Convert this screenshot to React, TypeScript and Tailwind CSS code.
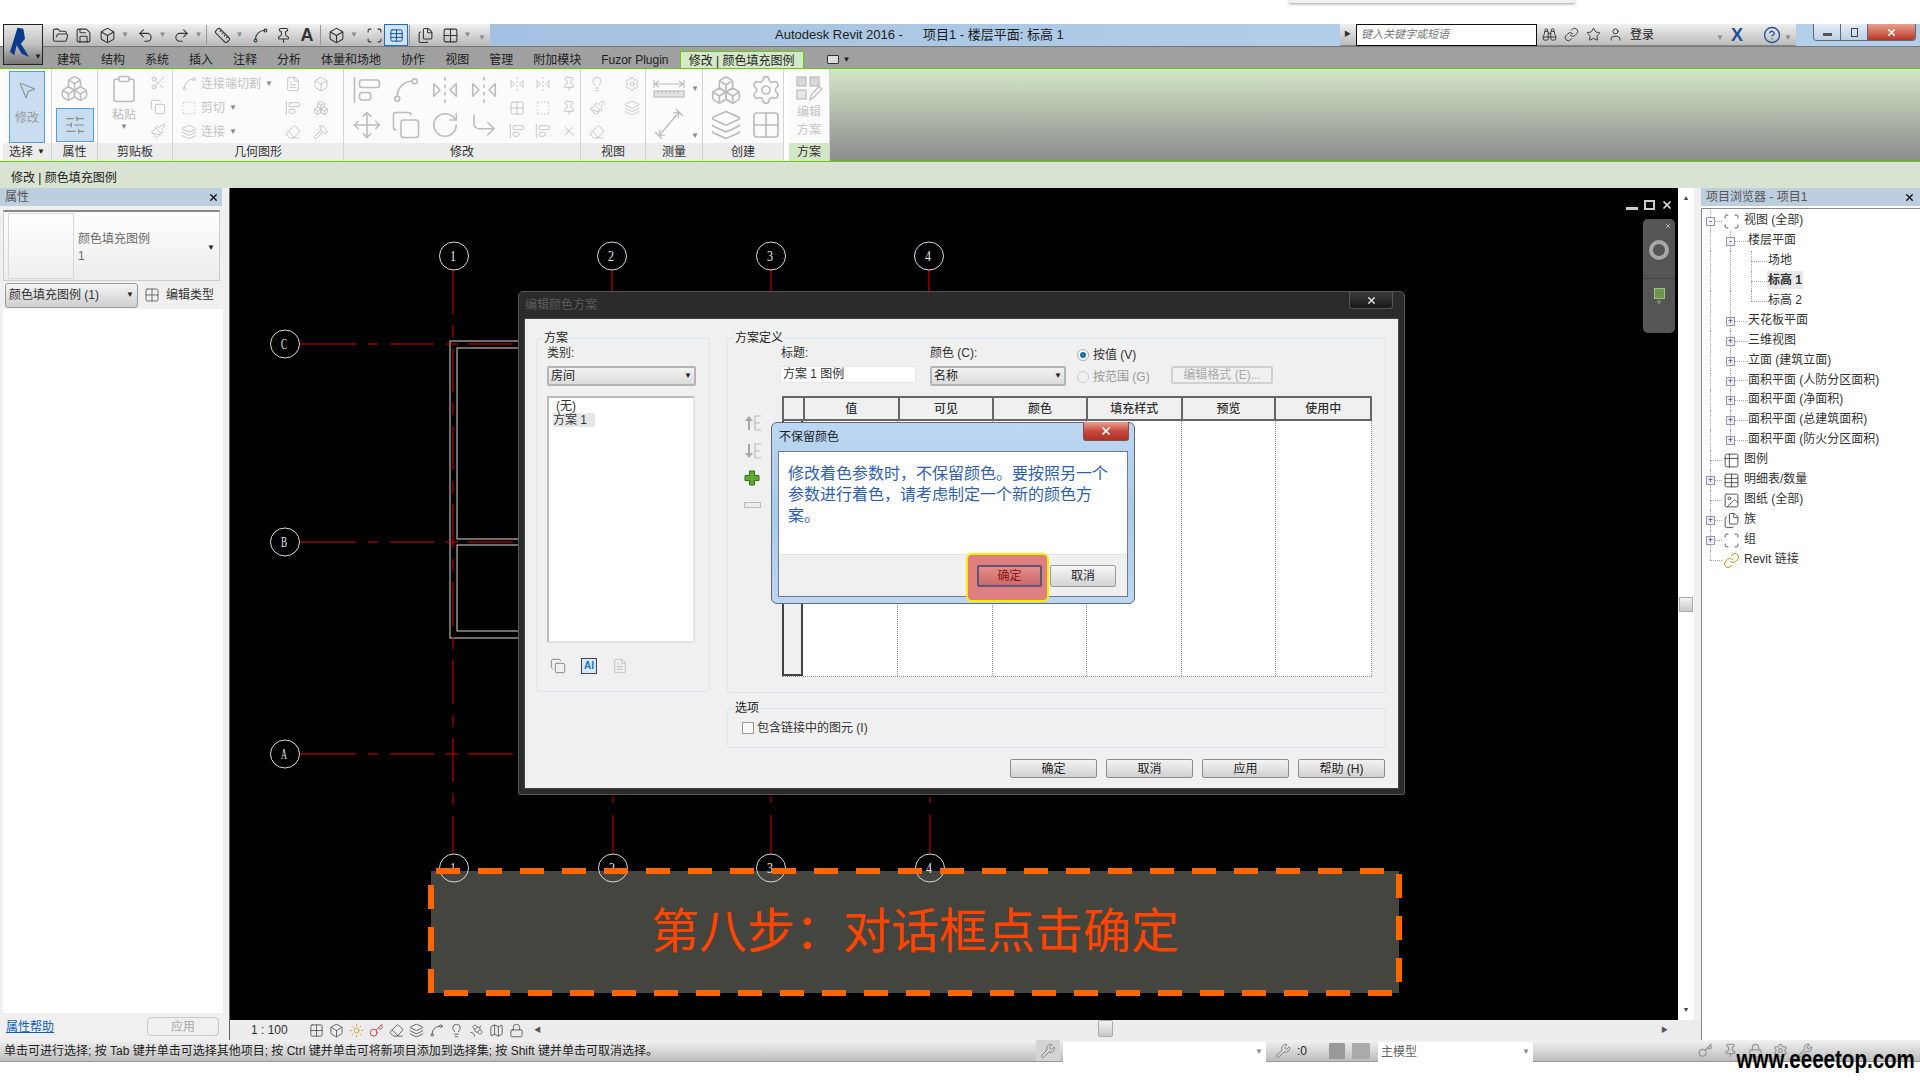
import {
  AlignStartVertical, Binoculars, Box, Boxes, CircleHelp, Clipboard, Copy,
  CornerDownRight, Eraser, Files, FileText, FlipHorizontal2, FolderOpen, Grid2x2, Hammer, Image, Key, Layers,
  Lightbulb, Link, Lock, Map, MousePointer2, Move, Paintbrush, Pin, Redo2, RotateCw, Ruler, Satellite,
  Save, Scan, Scissors, Settings, SlidersHorizontal, Spline, SquareDashed, Star, Sun, Table, Table2, Undo2, User, Wrench, X,
} from "lucide-react";
import type { ComponentType, ReactNode } from "react";

type IconType = ComponentType<{ size?: number; strokeWidth?: number; className?: string }>;

function Dim({ icon: I, size = 16 }: { icon: IconType; size?: number }) {
  return <I size={size} strokeWidth={1.25} className="text-[#bcbcbc] shrink-0" />;
}

function Caret({ dark }: { dark?: boolean }) {
  return <span className={`inline-block text-[8px] leading-none ${dark ? "text-[#222]" : "text-[#8a8a8a]"}`}>▼</span>;
}

function Qat({ icon: I, caret, w, size = 17 }: { icon: IconType; caret?: boolean; w: string; size?: number }) {
  return (
    <div className={`${w} shrink-0 flex items-center justify-center gap-[5px]`}>
      <I size={size} strokeWidth={1.5} className="text-[#333]" />
      {caret && <Caret />}
    </div>
  );
}

function QatSep() {
  return <div className="w-px h-[20px] bg-[#999] mx-[1px]" />;
}

function Panel({ w, label, green, children }: { w: string; label: ReactNode; green?: boolean; children: ReactNode }) {
  return (
    <div className={`${w} shrink-0 flex flex-col border-r border-[#d4d4d4]`}>
      <div className="h-[74px] bg-[#fbfbfb] overflow-hidden">{children}</div>
      <div className={`h-[18px] flex items-center justify-center text-xs text-[#333] ${green ? "bg-[#d3e6c6]" : "bg-[#ececec]"}`}>
        {label}
      </div>
    </div>
  );
}

const tabs = ["建筑", "结构", "系统", "插入", "注释", "分析", "体量和场地", "协作", "视图", "管理", "附加模块", "Fuzor Plugin"];

function DimensionIcon() {
  return (
    <svg width="32" height="20" viewBox="0 0 32 20" fill="none" stroke="#bcbcbc" strokeWidth="1.2">
      <path d="M1 1v8M31 1v8M2 5h28M2 5l4-3M2 5l4 3M30 5l-4-3M30 5l-4 3" />
      <rect x="1" y="12" width="30" height="6" fill="#e4e4e4" />
      <path d="M5 12v3M9 12v3M13 12v3M17 12v3M21 12v3M25 12v3" />
    </svg>
  );
}

function AlignedIcon() {
  return (
    <svg width="32" height="32" viewBox="0 0 32 32" fill="none" stroke="#bcbcbc" strokeWidth="1.2">
      <path d="M2 24l7 7M23 1l7 7M6 28L26 4M6 28l1-6M6 28l6-1M26 4l-1 6M26 4l-6 1" />
    </svg>
  );
}

function SchemeIcon() {
  return (
    <svg width="26" height="26" viewBox="0 0 26 26" fill="none" stroke="#bcbcbc" strokeWidth="1.2">
      <rect x="1" y="1" width="9" height="9" fill="#d8d8d8" />
      <rect x="14" y="1" width="9" height="9" fill="#d8d8d8" />
      <rect x="1" y="14" width="9" height="9" fill="#e6e6e6" />
      <path d="M14 24l1-5L23 10l3 3-9 9z" fill="#f4f4f4" />
    </svg>
  );
}

function Ribbon() {
  return (
    <div className="h-[94px] flex border-y border-[#66cc00] pl-[3px] bg-white">
      <Panel w="w-[49px]" label={<span className="flex items-center gap-1">选择 <Caret dark /></span>}>
        <div className="mx-[6px] mt-[2px] h-[72px] bg-[#c9ddf1] border border-[#5a9bd8] flex flex-col items-center pt-[8px] text-xs text-[#9a9a9a]">
          <MousePointer2 size={20} strokeWidth={1.25} className="text-[#8a8a8a]" />
          <span className="mt-[10px]">修改</span>
        </div>
      </Panel>
      <Panel w="w-[46px]" label="属性">
        <div className="flex flex-col items-center pt-[5px]">
          <Dim icon={Boxes} size={29} />
          <div className="mt-[5px] w-[38px] h-[34px] bg-[#c9ddf1] border border-[#5a9bd8] flex items-center justify-center">
            <SlidersHorizontal size={22} strokeWidth={1.25} className="text-[#8a8a8a]" />
          </div>
        </div>
      </Panel>
      <Panel w="w-[75px]" label="剪贴板">
        <div className="flex justify-between pl-[11px] pr-[6px] pt-[5px]">
          <div className="flex flex-col items-center text-xs text-[#bcbcbc]">
            <Dim icon={Clipboard} size={30} />
            <span className="mt-[3px]">粘贴</span>
            <Caret />
          </div>
          <div className="flex flex-col gap-[8px] pt-[1px]">
            <Dim icon={Scissors} />
            <Dim icon={Copy} />
            <Dim icon={Paintbrush} />
          </div>
        </div>
      </Panel>
      <Panel w="w-[171px]" label="几何图形">
        <div className="flex gap-[2px] pl-2 pt-[7px]">
          <div className="w-[102px] flex flex-col gap-[8px] text-xs text-[#c4c4c4]">
            <div className="flex items-center gap-[4px] whitespace-nowrap"><Dim icon={Spline} />连接端切割 <Caret /></div>
            <div className="flex items-center gap-[4px] whitespace-nowrap"><Dim icon={SquareDashed} />剪切 <Caret /></div>
            <div className="flex items-center gap-[4px] whitespace-nowrap"><Dim icon={Layers} />连接 <Caret /></div>
          </div>
          <div className="grid grid-cols-2 gap-x-[8px] gap-y-[8px] w-[48px]">
            <Dim icon={FileText} /><Dim icon={Box} />
            <Dim icon={AlignStartVertical} /><Dim icon={Boxes} />
            <Dim icon={Eraser} /><Dim icon={Hammer} />
          </div>
        </div>
      </Panel>
      <Panel w="w-[237px]" label="修改">
        <div className="flex gap-[10px] pl-2 pt-[6px]">
          <div className="grid grid-cols-4 gap-x-[9px] gap-y-[5px]">
            <Dim icon={AlignStartVertical} size={30} /><Dim icon={Spline} size={30} />
            <Dim icon={FlipHorizontal2} size={30} /><Dim icon={FlipHorizontal2} size={30} />
            <Dim icon={Move} size={30} /><Dim icon={Copy} size={30} />
            <Dim icon={RotateCw} size={30} /><Dim icon={CornerDownRight} size={30} />
          </div>
          <div className="grid grid-cols-3 gap-x-[10px] gap-y-[7px] pt-[1px]">
            <Dim icon={FlipHorizontal2} /><Dim icon={FlipHorizontal2} /><Dim icon={Pin} />
            <Dim icon={Grid2x2} /><Dim icon={SquareDashed} /><Dim icon={Pin} />
            <Dim icon={AlignStartVertical} /><Dim icon={AlignStartVertical} /><Dim icon={X} />
          </div>
        </div>
      </Panel>
      <Panel w="w-[65px]" label="视图">
        <div className="grid grid-cols-2 gap-x-[18px] gap-y-[8px] pl-2 pt-[7px] w-[60px]">
          <Dim icon={Lightbulb} /><Dim icon={Settings} />
          <Dim icon={Paintbrush} /><Dim icon={Layers} />
          <Dim icon={Eraser} />
        </div>
      </Panel>
      <Panel w="w-[57px]" label="测量">
        <div className="flex flex-col items-start gap-[9px] pt-[10px] pl-[7px]">
          <div className="flex items-center gap-[6px]"><DimensionIcon /><Caret /></div>
          <div className="flex items-end gap-[6px]"><AlignedIcon /><Caret /></div>
        </div>
      </Panel>
      <Panel w="w-[81px]" label="创建">
        <div className="grid grid-cols-2 gap-x-[7px] gap-y-[3px] pl-[7px] pt-[5px]">
          <Dim icon={Boxes} size={32} /><Dim icon={Settings} size={32} />
          <Dim icon={Layers} size={32} /><Dim icon={Grid2x2} size={32} />
        </div>
      </Panel>
      <div className="w-[5px] shrink-0 bg-white" />
      <Panel w="w-[41px]" label="方案" green>
        <div className="flex flex-col items-center pt-[7px] text-xs leading-[18px] text-[#c4c4c4]">
          <SchemeIcon />
          <span className="mt-[1px]">编辑</span>
          <span>方案</span>
        </div>
      </Panel>
      <div className="flex-1 bg-gradient-to-b from-[#d4e7c6] to-[#8c8c8c]" />
    </div>
  );
}

function PanelTitle({ text, pr }: { text: string; pr: string }) {
  return (
    <div className={`h-[18px] bg-[#bdcede] flex items-center justify-between pl-[5px] ${pr} text-xs text-[#555]`}>
      <span>{text}</span>
      <X size={11} strokeWidth={3} className="text-[#111]" />
    </div>
  );
}

function LeftPanel() {
  return (
    <div className="w-[229px] shrink-0 bg-[#f0f0f0] flex flex-col pr-[7px]">
      <PanelTitle text="属性" pr="pr-[3px]" />
      <div className="mt-1 ml-[3px] mr-[2px] h-[71px] border-t-2 border-[#888] bg-gradient-to-b from-white to-[#ececec] border-x border-b border-x-[#ccc] border-b-[#ccc] flex items-center pl-[4px] text-xs text-[#6a6a6a]">
        <div className="w-[66px] h-[66px] border border-[#d8d8d8] bg-gradient-to-b from-white to-[#efefef]" />
        <div className="ml-[4px] leading-[17px] pt-[3px]">
          <div>颜色填充图例</div>
          <div>1</div>
        </div>
        <div className="ml-auto mr-1 text-[#555]"><Caret dark /></div>
      </div>
      <div className="h-[28px] ml-[5px] flex items-center text-xs text-[#333]">
        <div className="w-[133px] h-[25px] border border-[#999] rounded-[3px] bg-gradient-to-b from-[#f4f4f4] to-[#cfcfcf] flex items-center justify-between px-[3px]">
          颜色填充图例 (1) <Caret dark />
        </div>
        <Grid2x2 size={16} strokeWidth={1.25} className="ml-[6px] text-[#555]" />
        <span className="ml-[6px]">编辑类型</span>
      </div>
      <div className="flex-1 bg-white ml-[3px] mr-[-1px]" />
      <div className="h-[27px] flex items-center justify-between pl-[6px] pr-[3px] text-xs">
        <span className="text-[#0a5ec2] underline">属性帮助</span>
        <div className="w-[72px] h-[19px] border border-[#c8c8c8] rounded-sm flex items-center justify-center text-[#aaa]">应用</div>
      </div>
    </div>
  );
}

type Row = { lvl: number; box?: string; icon?: IconType; text: string; bold?: boolean; gold?: boolean };

const rows: Row[] = [
  { lvl: 0, box: "-", icon: Scan, text: "视图 (全部)" },
  { lvl: 1, box: "-", text: "楼层平面" },
  { lvl: 2, text: "场地" },
  { lvl: 2, text: "标高 1", bold: true },
  { lvl: 2, text: "标高 2" },
  { lvl: 1, box: "+", text: "天花板平面" },
  { lvl: 1, box: "+", text: "三维视图" },
  { lvl: 1, box: "+", text: "立面 (建筑立面)" },
  { lvl: 1, box: "+", text: "面积平面 (人防分区面积)" },
  { lvl: 1, box: "+", text: "面积平面 (净面积)" },
  { lvl: 1, box: "+", text: "面积平面 (总建筑面积)" },
  { lvl: 1, box: "+", text: "面积平面 (防火分区面积)" },
  { lvl: 0, icon: Table2, text: "图例" },
  { lvl: 0, box: "+", icon: Table, text: "明细表/数量" },
  { lvl: 0, icon: Image, text: "图纸 (全部)" },
  { lvl: 0, box: "+", icon: Files, text: "族" },
  { lvl: 0, box: "+", icon: Scan, text: "组" },
  { lvl: 0, icon: Link, text: "Revit 链接", gold: true },
];

function TreeRow({ r, i }: { r: Row; i: number }) {
  const boxLeft = r.lvl === 0 ? "left-[4px]" : "left-[24px]";
  const textLeft = r.lvl === 0 ? "left-[41px]" : r.lvl === 1 ? "left-[45px]" : "left-[65px]";
  const tick = r.lvl === 0 ? "left-[8px] w-[14px]" : r.lvl === 1 ? "left-[28px] w-[18px]" : "left-[49px] w-[16px]";
  return (
    <div className="relative h-[19.95px] text-xs text-[#333] whitespace-nowrap">
      {i < 17 && <div className="absolute left-[8px] top-0 h-full border-l border-dotted border-[#aaa]" />}
      {i === 17 && <div className="absolute left-[8px] top-0 h-1/2 border-l border-dotted border-[#aaa]" />}
      {i >= 1 && i <= 11 && <div className={`absolute left-[28px] top-0 border-l border-dotted border-[#aaa] ${i === 11 ? "h-1/2" : "h-full"}`} />}
      {i >= 2 && i <= 4 && <div className={`absolute left-[49px] top-0 border-l border-dotted border-[#aaa] ${i === 4 ? "h-1/2" : "h-full"}`} />}
      <div className={`absolute top-1/2 border-t border-dotted border-[#aaa] ${tick}`} />
      {r.box && (
        <div className={`absolute ${boxLeft} top-[6px] w-[9px] h-[9px] border border-[#99a] bg-[#eef] flex items-center justify-center text-[9px] leading-none text-[#336]`}>
          {r.box}
        </div>
      )}
      {r.icon && (
        <r.icon
          size={17}
          strokeWidth={1.4}
          className={`absolute left-[21px] top-[2px] bg-white ${r.gold ? "text-[#c69a10]" : "text-[#555]"}`}
        />
      )}
      <span className={`absolute ${textLeft} top-[1px] px-[1px] ${r.bold ? "font-bold bg-[#e8e8e8] py-[1px] -mt-[1px]" : ""}`}>{r.text}</span>
    </div>
  );
}

function RightPanel() {
  return (
    <div className="flex-1 flex flex-col bg-white">
      <PanelTitle text="项目浏览器 - 项目1" pr="pr-[5px]" />
      <div className="flex-1 border-l border-t border-[#888] mt-[2px] pt-[2px]">
        {rows.map((r, i) => (
          <TreeRow key={r.text + i} r={r} i={i} />
        ))}
      </div>
    </div>
  );
}

function Bubble({ x, y, t }: { x: number; y: number; t: string }) {
  return (
    <g>
      <ellipse cx={x} cy={y} rx={14.5} ry={14} fill="none" stroke="#d8d8d8" strokeWidth={1} />
      <text x={x - 1} y={y + 5} textAnchor="middle" fontSize={14} fill="#e8e8e8" fontFamily="Liberation Serif" textLength={6} lengthAdjust="spacingAndGlyphs">
        {t}
      </text>
    </g>
  );
}

function Drawing() {
  const vDash = "44 11 12 11";
  const hDash = "57 12 10 12 44 12 12 10 45";
  return (
    <svg className="absolute inset-0 w-full h-full" viewBox="229 188 1448 832">
      <g stroke="#d8d8d8" strokeWidth={1} fill="none">
        <rect x={449} y={341} width={500} height={297} />
        <rect x={456} y={348} width={490} height={191} />
        <rect x={456} y={545} width={490} height={86} />
      </g>
      <g stroke="#e00000" strokeWidth={1}>
        <line x1={452} y1={270} x2={452} y2={854} strokeDasharray={vDash} />
        <line x1={611} y1={270} x2={611} y2={291} />
        <line x1={770} y1={270} x2={770} y2={291} />
        <line x1={928} y1={270} x2={928} y2={291} />
        <line x1={612} y1={797} x2={612} y2={803} />
        <line x1={770} y1={797} x2={770} y2={803} />
        <line x1={929} y1={797} x2={929} y2={803} />
        <line x1={612} y1={815} x2={612} y2={854} />
        <line x1={770} y1={815} x2={770} y2={854} />
        <line x1={929} y1={815} x2={929} y2={854} />
        <line x1={298} y1={344} x2={512} y2={344} strokeDasharray={hDash} />
        <line x1={298} y1={542} x2={512} y2={542} strokeDasharray={hDash} />
        <line x1={298} y1={754} x2={512} y2={754} strokeDasharray={hDash} />
      </g>
      <Bubble x={453} y={256} t="1" />
      <Bubble x={611} y={256} t="2" />
      <Bubble x={770} y={256} t="3" />
      <Bubble x={928} y={256} t="4" />
      <Bubble x={284} y={344} t="C" />
      <Bubble x={284} y={542} t="B" />
      <Bubble x={284} y={754} t="A" />
    </svg>
  );
}

function Group({ title, className, children }: { title: string; className: string; children: ReactNode }) {
  return (
    <div className={`relative border border-[#dde5ea] rounded-[3px] ${className}`}>
      <span className="absolute -top-[9px] left-[6px] bg-[#f0f0f0] px-[1px] text-xs leading-4 text-[#222]">{title}</span>
      {children}
    </div>
  );
}

function Select({ w, text }: { w: string; text: string }) {
  return (
    <div className={`${w} h-[20px] border-2 border-[#b5b5b5] rounded-[2px] bg-gradient-to-b from-[#f2f2f2] to-[#dcdcdc] flex items-center justify-between px-[2px] text-xs text-[#222]`}>
      {text} <Caret dark />
    </div>
  );
}

function DialogButton({ text }: { text: string }) {
  return (
    <div className="w-[87px] h-[19px] border border-[#8c8c8c] rounded-[2px] bg-gradient-to-b from-[#f4f4f4] to-[#d0d0d0] flex items-center justify-center text-xs text-[#222]">
      {text}
    </div>
  );
}

function MoveRowIcon({ down }: { down?: boolean }) {
  return (
    <svg width="18" height="18" viewBox="0 0 18 18" fill="none">
      <path d={down ? "M4 2v9H1l4 5 4-5H6V2z" : "M4 16V7H1l4-5 4 5H6v9z"} fill="#a8a8a8" />
      <path d="M17 2h-6v14h6M11 9h5" stroke="#bbb" strokeWidth="1.2" />
    </svg>
  );
}

function GreenPlus() {
  return (
    <svg width="16" height="16" viewBox="0 0 16 16">
      <path d="M5.5 1h5v4.5H15v5h-4.5V15h-5v-4.5H1v-5h4.5z" fill="#5fa832" stroke="#2f6f1a" strokeWidth="1" />
    </svg>
  );
}

const cols = ["w-[21px]", "w-[95px]", "w-[95px]", "w-[94px]", "w-[95px]", "w-[94px]", "w-[96px]"];
const heads = ["", "值", "可见", "颜色", "填充样式", "预览", "使用中"];

function ColorTable() {
  return (
    <div className="w-[590px] h-[281px] flex flex-col">
      <div className="flex h-[25px] border-t-2 border-b-2 border-l-2 border-[#666] bg-[#f0f0f0]">
        {heads.map((h, i) => (
          <div key={i} className={`${cols[i]} border-r-2 border-[#666] flex items-center justify-center text-xs font-medium text-[#333]`}>
            {h}
          </div>
        ))}
      </div>
      <div className="flex flex-1 bg-white border-b border-dotted border-[#999]">
        {heads.map((h, i) =>
          i === 0 ? (
            <div key={i} className="w-[21px] bg-[#f0f0f0] border-x-2 border-b-2 border-[#444]" />
          ) : (
            <div key={i} className={`${cols[i]} border-r border-dotted border-[#999]`} />
          )
        )}
      </div>
    </div>
  );
}

function MainDialog() {
  return (
    <div className="absolute left-[288px] top-[103px] w-[887px] h-[504px] bg-[#2b2b2b] border border-[#555] rounded-t-[5px] rounded-b-[2px] flex flex-col px-[5px] pb-[5px]">
      <div className="h-[26px] flex items-center pl-[1px] text-xs text-[#5c5c5c] relative">
        编辑颜色方案
        <div className="absolute right-[6px] top-0 w-[44px] h-[17px] bg-gradient-to-b from-[#3c3c3c] to-[#181818] border border-[#555] border-t-0 rounded-b-[3px] flex items-center justify-center">
          <X size={11} strokeWidth={3} className="text-[#ddd]" />
        </div>
      </div>
      <div className="flex-1 bg-[#f0f0f0] border border-[#444] pl-[11px] pt-[19px] text-xs text-[#333]">
        <div className="flex gap-[17px]">
          <Group title="方案" className="w-[174px] h-[354px] pl-[10px] pt-[6px]">
            <div className="h-[21px]">类别:</div>
            <Select w="w-[149px]" text="房间" />
            <div className="mt-[10px] w-[148px] h-[247px] bg-white border-2 border-[#bbb] border-r-[#e4e4e4] border-b-[#e4e4e4] pl-[4px] pt-[1px] leading-[14px]">
              <div className="pl-[3px]">(无)</div>
              <div className="w-[42px] bg-[#e6e6e6]">方案 1</div>
            </div>
            <div className="flex gap-[15px] pl-[3px] pt-[15px]">
              <Copy size={16} strokeWidth={1.25} className="text-[#777]" />
              <div className="w-[16px] h-[16px] border border-[#445] bg-[#d8e8f6] flex items-center justify-center text-[10px] font-bold text-[#1d6fc0]">AI</div>
              <FileText size={16} strokeWidth={1.25} className="text-[#bbb]" />
            </div>
          </Group>
          <Group title="方案定义" className="w-[659px] h-[355px] pt-[6px]">
            <div className="flex h-[42px]">
              <div className="ml-[52px] w-[136px]">
                <div className="h-[21px] pl-[1px]">标题:</div>
                <div className="h-[17px] bg-white border border-[#e6e6e6] pl-[2px] leading-[15px]">方案 1 图例</div>
              </div>
              <div className="ml-[14px]">
                <div className="h-[21px]">颜色 (C):</div>
                <Select w="w-[136px]" text="名称" />
              </div>
              <div className="ml-[11px] w-[94px] flex flex-col gap-[6px] pt-[2px]">
                <div className="flex items-center gap-[4px]">
                  <span className="w-[12px] h-[12px] rounded-full border border-[#aaa] bg-white flex items-center justify-center">
                    <span className="w-[6px] h-[6px] rounded-full bg-[#1d6fa8]" />
                  </span>
                  按值 (V)
                </div>
                <div className="flex items-center gap-[4px] text-[#999]">
                  <span className="w-[12px] h-[12px] rounded-full border border-[#ccc]" />
                  按范围 (G)
                </div>
              </div>
              <div className="w-[102px] h-[18px] mt-[21px] border-2 border-[#d0d0d0] rounded-[2px] flex items-center justify-center text-[#aaa]">
                编辑格式 (E)...
              </div>
            </div>
            <div className="flex mt-[9px]">
              <div className="w-[54px] pl-[16px] pt-[18px] flex flex-col gap-[10px]">
                <MoveRowIcon />
                <MoveRowIcon down />
                <GreenPlus />
                <div className="w-[17px] h-[6px] mt-[6px] border border-[#bbb] bg-[#eee]" />
              </div>
              <ColorTable />
            </div>
          </Group>
        </div>
        <Group title="选项" className="mt-[15px] ml-[191px] w-[659px] h-[40px] flex items-center pl-[14px]">
          <span className="w-[12px] h-[12px] border border-[#999] bg-[#f8f8f8] mr-[3px]" />
          包含链接中的图元 (I)
        </Group>
        <div className="flex justify-end gap-[9px] mt-[11px] pr-[13px]">
          <DialogButton text="确定" />
          <DialogButton text="取消" />
          <DialogButton text="应用" />
          <DialogButton text="帮助 (H)" />
        </div>
      </div>
    </div>
  );
}

function AlertDialog() {
  return (
    <div className="absolute left-[541px] top-[234px] w-[364px] h-[182px] rounded-[6px] border border-[#667] bg-gradient-to-b from-[#bcd7f2] via-[#a8cbec] to-[#bcd7f2] flex flex-col px-[6px] pb-[6px]">
      <div className="h-[28px] flex items-center pl-[1px] text-xs text-[#222] relative">
        不保留颜色
        <div className="absolute right-[-1px] top-[-1px] w-[46px] h-[19px] rounded-b-[3px] border border-[#8a4a4a] border-t-0 bg-gradient-to-b from-[#e8a090] via-[#c8483a] to-[#b03028] flex items-center justify-center">
          <X size={12} strokeWidth={3.5} className="text-white" />
        </div>
      </div>
      <div className="flex-1 bg-white border border-[#778] flex flex-col">
        <div className="h-[102px] pl-[9px] pt-[11px] text-base leading-[21px] text-[#2f5fb3]">
          修改着色参数时，不保留颜色。要按照另一个
          <br />
          参数进行着色，请考虑制定一个新的颜色方
          <br />
          案。
        </div>
        <div className="flex-1 bg-[#f0f0f0] border-t border-[#e4e4e4] flex justify-end gap-[8px] pr-[11px] pt-[10px] text-xs">
          <div className="relative w-[65px] h-[22px]">
            <div className="absolute -left-[11px] -top-[12px] w-[83px] h-[49px] rounded-[6px] border-2 border-[#f4f000] bg-[#df7f7f]" />
            <div className="relative w-full h-full border-2 border-[#5f5778] rounded-[2px] bg-gradient-to-b from-[#e48a8a] to-[#cc6a6a] flex items-center justify-center text-[#8a1616]">
              确定
            </div>
          </div>
          <div className="w-[66px] h-[22px] border border-[#999] rounded-[2px] bg-gradient-to-b from-[#f6f6f6] to-[#d4d4d4] flex items-center justify-center text-[#222]">
            取消
          </div>
        </div>
      </div>
    </div>
  );
}

function Annotation() {
  const stroke = { stroke: "#ff6600", strokeWidth: 6, strokeDasharray: "24 18" };
  return (
    <div className="absolute left-[201px] top-[683px] w-[968px] h-[122px] bg-[#43453e] flex items-center justify-center">
      <span className="text-[48px] leading-none text-[#ff4400] font-['Liberation_Serif','Noto_Sans_CJK_SC',serif]">
        第八步：对话框点击确定
      </span>
      <svg className="absolute inset-0 w-full h-full overflow-visible" viewBox="0 0 968 122" fill="none">
        <Bubble x={23} y={-3} t="1" />
        <Bubble x={182} y={-3} t="2" />
        <Bubble x={340} y={-3} t="3" />
        <Bubble x={499} y={-3} t="4" />
        <line x1={5} y1={0} x2={965} y2={0} {...stroke} />
        <line x1={13} y1={122} x2={965} y2={122} {...stroke} />
        <line x1={0} y1={14} x2={0} y2={125} {...stroke} />
        <line x1={968} y1={3} x2={968} y2={122} {...stroke} />
      </svg>
    </div>
  );
}

function NavBar() {
  return (
    <div className="absolute right-[3px] top-[31px] w-[32px] h-[114px] rounded-[5px] bg-[#555] flex flex-col items-center pt-[3px] text-[#aaa]">
      <X size={8} strokeWidth={3} className="self-end mr-[3px]" />
      <div className="mt-[10px] w-[20px] h-[20px] rounded-full border-[4px] border-[#a8a8a8]" />
      <div className="mt-[18px] w-full border-t border-[#444]" />
      <div className="mt-[9px] w-[11px] h-[11px] bg-[#6c9650] border border-[#9ac080]" />
      <Caret />
    </div>
  );
}

function Canvas() {
  return (
    <div className="relative flex-1 bg-black overflow-hidden">
      <Drawing />
      <div className="absolute right-[5px] top-[11px] flex items-center gap-[6px] text-[#ddd]">
        <div className="w-[12px] h-[3px] mt-[6px] bg-[#ccc]" />
        <div className="w-[11px] h-[10px] border-2 border-[#ccc]" />
        <X size={12} strokeWidth={3.5} />
      </div>
      <NavBar />
      <MainDialog />
      <AlertDialog />
      <Annotation />
    </div>
  );
}

function ViewBar() {
  const icons: IconType[] = [Grid2x2, Box, Sun, Key, Eraser, Layers, Spline, Lightbulb, Satellite, Map, Lock];
  return (
    <div className="h-[20px] bg-[#ececec] flex items-center text-xs text-[#333] relative">
      <span className="ml-[21px] w-[58px]">1 : 100</span>
      <div className="flex items-center gap-[5px]">
        {icons.map((I, i) => (
          <I key={i} size={15} strokeWidth={1.4} className={i === 2 ? "text-[#c9a020]" : i === 3 ? "text-[#c03030]" : "text-[#555]"} />
        ))}
      </div>
      <span className="ml-[10px] text-[7px] text-[#555]">◀</span>
      <div className="absolute left-[868px] top-0 w-[15px] h-[17px] border border-[#aaa] rounded-[2px] bg-gradient-to-b from-[#f4f4f4] to-[#c8c8c8]" />
      <span className="absolute right-[33px] text-[7px] text-[#555]">▶</span>
    </div>
  );
}

function StatusBar() {
  return (
    <div className="h-[22px] bg-gradient-to-b from-[#f2f2f2] to-[#bdbdbd] border-b border-[#999] flex items-center text-xs text-[#222] whitespace-nowrap">
      <div className="w-[1036px] pl-[4px]">单击可进行选择; 按 Tab 键并单击可选择其他项目; 按 Ctrl 键并单击可将新项目添加到选择集; 按 Shift 键并单击可取消选择。</div>
      <div className="w-[24px] h-full bg-[#d4d4d4] flex items-center justify-center">
        <Wrench size={16} strokeWidth={1.5} className="text-[#888]" />
      </div>
      <div className="ml-[3px] w-[203px] h-[20px] mt-[2px] bg-white flex items-center justify-end pr-[3px]"><Caret /></div>
      <Wrench size={16} strokeWidth={1.5} className="text-[#888] ml-[9px]" />
      <span className="ml-[6px] w-[32px]">:0</span>
      <div className="w-[16px] h-[16px] bg-[#999] rounded-[1px]" />
      <div className="ml-[7px] w-[18px] h-[16px] bg-[#aaa] rounded-[1px]" />
      <div className="ml-[8px] w-[155px] h-[20px] mt-[2px] bg-white flex items-center justify-between px-[3px] text-[#666]">
        主模型 <Caret />
      </div>
      <div className="ml-[165px] flex gap-[10px] text-[#999]">
        <Key size={15} /><Pin size={15} /><Lock size={15} /><Settings size={15} /><Wrench size={15} />
      </div>
    </div>
  );
}

export default function App() {
  return (
    <div className="relative w-[1920px] h-[1080px] overflow-hidden bg-white font-['Liberation_Sans','Noto_Sans_CJK_SC',sans-serif]">
      <div className="h-[24px]">
        <div className="ml-[1289px] w-[286px] h-[3px] bg-[#f2f2f2] shadow-[0_1px_3px_rgba(0,0,0,0.4)]" />
      </div>
      <div className="relative">
        <div className="absolute left-[3px] top-0 z-10 w-[40px] h-[41px] border border-[#222] bg-gradient-to-b from-[#e8e8e8] via-[#c0c0c0] to-[#777] flex items-start pl-[4px] pt-[2px]">
          <svg width="24" height="30" viewBox="0 0 24 36">
            <path d="M9 1 L16 2 L18 14 L13 20 L23 36 L14 32 L8 22 L5 34 L0 30 Z" fill="#0a3a8c" />
          </svg>
          <span className="mt-[15px] ml-[2px]"><Caret dark /></span>
        </div>
        <div className="h-[23px] flex pl-[43px] border-b border-[#777]">
          <div className="w-[447px] bg-gradient-to-b from-[#f2f2f2] to-[#b8b8b8] flex items-center pl-[6px]">
            <Qat icon={FolderOpen} w="w-[23px]" />
            <Qat icon={Save} w="w-[23px]" />
            <Qat icon={Box} caret w="w-[38px]" />
            <Qat icon={Undo2} caret w="w-[37px]" />
            <Qat icon={Redo2} caret w="w-[35px]" />
            <QatSep />
            <Qat icon={Ruler} caret w="w-[41px]" />
            <Qat icon={Spline} w="w-[23px]" />
            <Qat icon={Pin} w="w-[23px]" />
            <span className="w-[24px] text-center text-[18px] font-bold text-[#333] leading-none">A</span>
            <QatSep />
            <Qat icon={Box} caret w="w-[42px]" />
            <Qat icon={Scan} w="w-[20px]" />
            <div className="w-[24px] h-[22px] bg-[#cfe2f6] border border-[#1f6fc0] flex items-center justify-center">
              <Table size={15} strokeWidth={1.6} className="text-[#1c4f8a]" />
            </div>
            <QatSep />
            <Qat icon={Files} w="w-[29px]" />
            <Qat icon={Grid2x2} caret w="w-[33px]" />
            <span className="ml-[5px]"><Caret /></span>
          </div>
          <div className="w-[850px] bg-gradient-to-r from-[#a3c1e0] to-[#b3cee9] flex items-center pl-[285px] text-[13px] text-[#1c1c1c] whitespace-nowrap">
            Autodesk Revit 2016 -<span className="ml-[20px]">项目1 - 楼层平面: 标高 1</span>
          </div>
          <div className="w-[456px] bg-gradient-to-b from-[#f0f0f0] to-[#bcbcbc] flex items-center border-b border-[#888]">
            <span className="ml-[4px] text-[7px] text-[#333]">▶</span>
            <div className="ml-[5px] w-[181px] h-[22px] bg-white border border-[#111] flex items-center pl-1 text-[11px] italic text-[#777]">
              键入关键字或短语
            </div>
            <div className="ml-[5px] flex items-center gap-[7px] text-[#333]">
              <Binoculars size={15} strokeWidth={1.5} />
              <Link size={15} strokeWidth={1.5} />
              <Star size={15} strokeWidth={1.5} />
              <User size={15} strokeWidth={1.5} />
            </div>
            <span className="ml-[7px] text-xs text-[#222]">登录</span>
            <span className="ml-[62px]"><Caret /></span>
            <span className="ml-[7px] text-[18px] font-bold leading-none text-[#1d4f96]">X</span>
            <CircleHelp size={18} strokeWidth={1.75} className="ml-[20px] text-[#1d4f96]" />
            <span className="ml-[3px]"><Caret /></span>
          </div>
          <div className="flex-1 bg-[#b4cfe9] flex items-start justify-end pr-[4px]">
            <div className="w-[103px] h-[17px] flex rounded-b-[4px] overflow-hidden border border-t-0 border-[#667]">
              <div className="flex-1 bg-gradient-to-b from-[#e4edf6] to-[#bcd0e4] flex items-center justify-center border-r border-[#667]"><div className="w-[9px] h-[3px] bg-[#555] mt-1" /></div>
              <div className="flex-1 bg-gradient-to-b from-[#e4edf6] to-[#bcd0e4] flex items-center justify-center border-r border-[#667]"><div className="w-[7px] h-[9px] border border-[#444]" /></div>
              <div className="w-[47px] bg-gradient-to-b from-[#e8a090] to-[#b83024] flex items-center justify-center"><X size={11} strokeWidth={3.5} className="text-white" /></div>
            </div>
          </div>
        </div>
        <div className="h-[21px] bg-[#a0a0a0] flex items-end pl-[57px] gap-5 text-xs text-[#222] whitespace-nowrap">
          {tabs.map((t) => (
            <span key={t} className="h-[21px] leading-[26px]">{t}</span>
          ))}
          <span className="ml-[-9px] h-[17px] w-[124px] bg-[#d5e8c8] border border-b-0 border-[#66cc00] text-center leading-[18px]">修改 | 颜色填充图例</span>
          <span className="ml-[3px] h-[17px] flex items-center gap-1 text-[#333]">
            <span className="w-[12px] h-[9px] border border-[#333] rounded-[1px] bg-[#ddd]" />
            <Caret dark />
          </span>
        </div>
      </div>
      <Ribbon />
      <div className="h-[26px] bg-[#d9e3d2] flex items-center pl-[11px] pt-[5px] text-xs text-[#222]">修改 | 颜色填充图例</div>
      <div className="h-[852px] flex">
        <LeftPanel />
        <div className="w-[1472px] shrink-0 flex flex-col bg-[#ececec] border-l border-[#666]">
          <div className="flex-1 flex min-h-0">
            <Canvas />
            <div className="relative w-[16px] bg-white flex flex-col items-center justify-between py-[5px] text-[7px] text-[#444]">
              <span>▲</span>
              <div className="absolute left-[1px] top-[409px] w-[14px] h-[15px] border border-[#aaa] bg-gradient-to-b from-[#f4f4f4] to-[#c8c8c8]" />
              <span>▼</span>
            </div>
            <div className="w-[7px] bg-[#f0f0f0]" />
          </div>
          <ViewBar />
        </div>
        <RightPanel />
      </div>
      <StatusBar />
      <div className="absolute right-[5px] top-[1046px] origin-right scale-x-[0.79] text-[26px] font-bold leading-none text-black font-['Liberation_Sans',sans-serif]">
        www.eeeetop.com
      </div>
    </div>
  );
}
